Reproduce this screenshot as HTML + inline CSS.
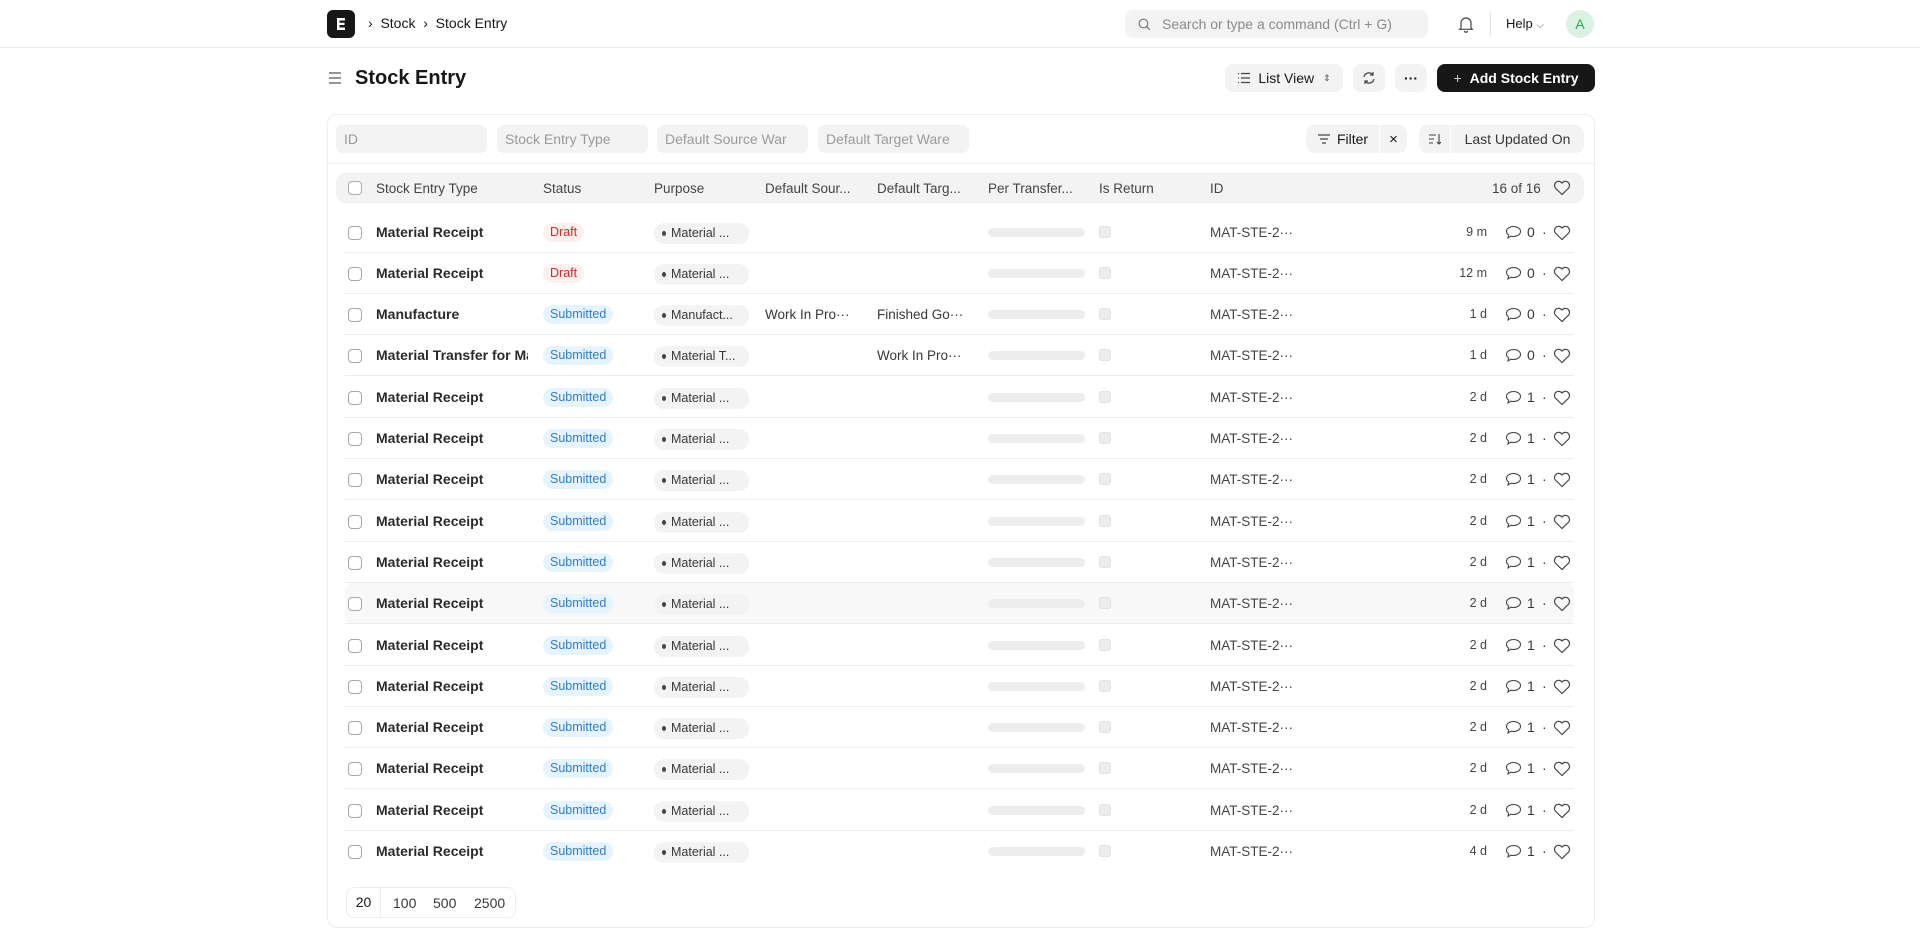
<!DOCTYPE html>
<html><head><meta charset="utf-8"><style>
*{box-sizing:border-box;margin:0;padding:0}
body{width:1920px;height:945px;background:#fff;font-family:"Liberation Sans",sans-serif;color:#383838;position:relative;overflow:hidden;font-size:13px}
.abs{position:absolute}
.nav{position:absolute;left:0;top:0;width:1920px;height:48px;border-bottom:1px solid #ededed}
.logo{left:327px;top:10px;width:28px;height:28px;background:#171717;border-radius:6px}
.btn{position:absolute;background:#f3f3f3;border-radius:8px;height:28px;display:flex;align-items:center;justify-content:center;font-size:14px;color:#171717}
.card{left:327px;top:114px;width:1268px;height:814px;border:1px solid #ededed;border-radius:10px}
.inp{position:absolute;top:125px;height:28px;background:#f3f3f3;border-radius:7px;color:#9a9a9a;font-size:14px;padding-left:8px;line-height:28px;width:151px;overflow:hidden;white-space:nowrap}
.hdr{left:336px;top:173px;width:1248px;height:30px;background:#f3f3f3;border-radius:8px}
.row{position:absolute;left:345px;width:1229px;height:41px}
.row .ln{position:absolute;left:0;right:0;bottom:0;height:1px;background:#ededed}
.cb{position:absolute;left:3px;width:14px;height:14px;border:1px solid #a8a8a8;border-radius:4px;background:#fff}
.c{position:absolute;top:0;height:41px;line-height:41px;white-space:nowrap;font-size:13.5px}
.t{left:31px;font-weight:bold;color:#2b2b2b;font-size:14px;width:152px;overflow:hidden}
.badge{position:absolute;top:11px;height:19px;line-height:19px;border-radius:10px;padding:0 7px;font-size:12.5px}
.sub{left:198px;background:#e6f4ff;color:#2f7ccb}
.dr{left:198px;background:#fff0f0;color:#cc2929}
.pur{position:absolute;left:309px;top:11px;height:21px;width:95px;background:#f3f3f3;border-radius:10px;font-size:12.5px;line-height:21px;padding-left:17px;color:#383838}
.pur:before{content:"";position:absolute;left:8px;top:8px;width:4px;height:5px;border-radius:50%;background:#444}
.bar{position:absolute;left:643px;top:16px;width:97px;height:9px;border-radius:5px;background:#ededed}
.ir{position:absolute;left:754px;top:14px;width:12px;height:12px;border-radius:3px;background:#ededed;border:1px solid #e2e2e2}
.id{left:865px;color:#444}
.tm{right:87px;font-size:12.5px;color:#444}
.cm{position:absolute;left:1160px;top:13px}
.cnt{left:1182px;font-size:14px}
.dot{left:1197px;font-size:14px}
.hrt{position:absolute;left:1208px;top:13px}
</style></head><body>
<div class="nav">
 <div class="abs logo"><svg width="28" height="28" viewBox="0 0 28 28"><path d="M10 8h8v2.5h-5.5v2.2h5v2.3h-5v2.5H18V20h-8z" fill="#fff"/></svg></div>
 <div class="abs" style="left:368px;top:15px;font-size:14px;color:#171717">›&nbsp; Stock &nbsp;›&nbsp; Stock Entry</div>
 <div class="abs" style="left:1125px;top:10px;width:303px;height:28px;background:#f3f3f3;border-radius:8px;color:#8a8a8a;font-size:14px;line-height:28px;padding-left:37px">
  <svg class="abs" style="left:13px;top:8px" width="13" height="13" viewBox="0 0 13 13"><circle cx="5.5" cy="5.5" r="4.3" fill="none" stroke="#777" stroke-width="1.2"/><path d="M8.7 8.7L12 12" stroke="#777" stroke-width="1.2"/></svg>Search or type a command (Ctrl + G)</div>
 <svg class="abs" style="left:1458px;top:16px" width="16" height="17" viewBox="0 0 16 17"><path d="M3 12V7a5 5 0 0110 0v5l1.3 1.3H1.7z M6.3 15a1.8 1.8 0 003.4 0" fill="none" stroke="#444" stroke-width="1.2"/></svg>
 <div class="abs" style="left:1490px;top:12px;width:1px;height:24px;background:#e2e2e2"></div>
 <div class="abs" style="left:1506px;top:16px;font-size:13px;color:#171717">Help <span style="font-size:10px;color:#666">⌵</span></div>
 <div class="abs" style="left:1566px;top:10px;width:28px;height:28px;border-radius:50%;background:#d9f2e2;color:#38a160;text-align:center;line-height:28px;font-size:14px">A</div>
</div>
<svg class="abs" style="left:328px;top:72px" width="14" height="12" viewBox="0 0 14 12"><path d="M1 1h12M1 6h12M1 11h12" stroke="#555" stroke-width="1.2"/></svg>
<div class="abs" style="left:355px;top:67px;font-size:20px;font-weight:bold;color:#171717">Stock Entry</div>
<div class="btn" style="left:1225px;top:64px;width:118px"><svg width="14" height="12" viewBox="0 0 14 12" style="margin-right:7px"><path d="M1 1.5h1M4 1.5h9M1 6h1M4 6h9M1 10.5h1M4 10.5h9" stroke="#444" stroke-width="1.2"/></svg>List View <span style="font-size:9px;margin-left:9px;color:#555">⇕</span></div>
<div class="btn" style="left:1353px;top:64px;width:32px"><svg width="14" height="14" viewBox="0 0 14 14"><path d="M2 6a5 5 0 019-2M12 8a5 5 0 01-9 2M11 1v3H8M3 13v-3h3" fill="none" stroke="#444" stroke-width="1.2"/></svg></div>
<div class="btn" style="left:1395px;top:64px;width:32px;font-weight:bold">···</div>
<div class="btn" style="left:1437px;top:64px;width:158px;background:#171717;color:#fff;font-weight:bold"><span style="font-weight:normal;margin-right:8px;color:#ccc">+</span>Add Stock Entry</div>

<div class="abs card"></div>
<div class="inp" style="left:336px">ID</div>
<div class="inp" style="left:497px">Stock Entry Type</div>
<div class="inp" style="left:657px">Default Source War</div>
<div class="inp" style="left:818px">Default Target Ware</div>
<div class="btn" style="left:1306px;top:125px;width:73px;border-radius:8px 0 0 8px"><svg width="14" height="10" viewBox="0 0 14 10" style="margin-right:6px"><path d="M1 1h12M3 5h8M5 9h4" stroke="#444" stroke-width="1.2"/></svg>Filter</div>
<div class="btn" style="left:1380px;top:125px;width:27px;border-radius:0 8px 8px 0;font-size:15px">×</div>
<div class="btn" style="left:1419px;top:125px;width:31px;border-radius:8px 0 0 8px"><svg width="14" height="12" viewBox="0 0 14 12"><path d="M1 2h7M1 6h5M1 10h4M11 1v10M9 9l2 2 2-2" fill="none" stroke="#444" stroke-width="1.1"/></svg></div>
<div class="btn" style="left:1451px;top:125px;width:133px;border-radius:0 8px 8px 0;color:#383838">Last Updated On</div>
<div class="abs" style="left:328px;top:163px;width:1266px;height:1px;background:#ededed"></div>

<div class="abs hdr"></div>
<div class="abs" style="left:345px;top:173px;width:1229px;height:30px;font-size:13.5px;color:#444">
 <div class="cb" style="top:8px"></div>
 <div class="abs" style="left:31px;top:8px">Stock Entry Type</div>
 <div class="abs" style="left:198px;top:8px">Status</div>
 <div class="abs" style="left:309px;top:8px">Purpose</div>
 <div class="abs" style="left:420px;top:8px">Default Sour...</div>
 <div class="abs" style="left:532px;top:8px">Default Targ...</div>
 <div class="abs" style="left:643px;top:8px">Per Transfer...</div>
 <div class="abs" style="left:754px;top:8px">Is Return</div>
 <div class="abs" style="left:865px;top:8px">ID</div>
 <div class="abs" style="left:1147px;top:8px">16 of 16</div>
 <svg class="abs" style="left:1208px;top:7px" width="18" height="16" viewBox="0 0 18 16"><path d="M9 14.5L2.3 8A4 4 0 019 3a4 4 0 016.7 5z" fill="none" stroke="#444" stroke-width="1.2"/></svg>
</div>

<div id="rows"></div>
<script>
var data=[["Material Receipt","Draft","Material ...","","","9 m","0"],["Material Receipt","Draft","Material ...","","","12 m","0"],["Manufacture","Submitted","Manufact...","Work In Pro\u00b7\u00b7\u00b7","Finished Go\u00b7\u00b7\u00b7","1 d","0"],["Material Transfer for Manufacture","Submitted","Material T...","","Work In Pro\u00b7\u00b7\u00b7","1 d","0"]];
for(var i=0;i<11;i++)data.push(["Material Receipt","Submitted","Material ...","","","2 d","1"]);
data.push(["Material Receipt","Submitted","Material ...","","","4 d","1"]);
var h="";
data.forEach(function(d,i){
 var top=211.5+41.3*i;
 h+='<div class="row" style="top:'+top+'px;'+(i==9?'background:#f8f8f8;border-radius:8px;':'')+'">'+
 (i<15?'<div class="ln"></div>':'')+
 '<div class="cb" style="top:14px"></div><div class="c t">'+d[0]+'</div>'+
 '<div class="badge '+(d[1]=="Draft"?"dr":"sub")+'">'+d[1]+'</div>'+
 '<div class="pur">'+d[2]+'</div>'+
 '<div class="c" style="left:420px">'+d[3]+'</div><div class="c" style="left:532px">'+d[4]+'</div>'+
 '<div class="bar"></div><div class="ir"></div><div class="c id">MAT-STE-2\u00b7\u00b7\u00b7</div>'+
 '<div class="c tm">'+d[5]+'</div>'+
 '<svg class="cm" width="17" height="15" viewBox="0 0 17 15"><path d="M8.5 1.5c4 0 7 2.2 7 5s-3 5-7 5c-.9 0-1.8-.1-2.6-.3L3 13l.6-3C2.3 9 1.5 7.8 1.5 6.5c0-2.8 3-5 7-5z" fill="none" stroke="#444" stroke-width="1.1"/></svg>'+
 '<div class="c cnt">'+d[6]+'</div><div class="c dot">·</div>'+
 '<svg class="hrt" width="18" height="16" viewBox="0 0 18 16"><path d="M9 14.5L2.3 8A4 4 0 019 3a4 4 0 016.7 5z" fill="none" stroke="#444" stroke-width="1.2"/></svg></div>';
});
document.getElementById("rows").innerHTML=h;
</script>
<div class="abs" style="left:346px;top:887px;width:170px;height:31px;border:1px solid #ededed;border-radius:8px;font-size:14px;color:#383838">
 <div class="abs" style="left:0;top:0;width:34px;height:29px;border-right:1px solid #ededed;text-align:center;line-height:29px;color:#171717">20</div>
 <div class="abs" style="left:46px;top:7px">100</div>
 <div class="abs" style="left:86px;top:7px">500</div>
 <div class="abs" style="left:127px;top:7px">2500</div>
</div>
</body></html>
